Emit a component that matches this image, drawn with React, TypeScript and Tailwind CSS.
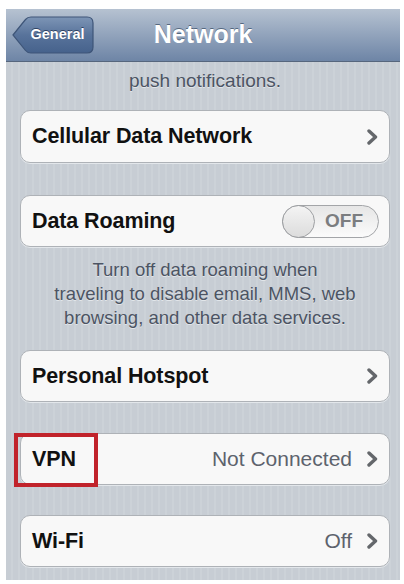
import React from "react";

const font = "font-['Liberation_Sans',Arial,sans-serif]";

function Chevron() {
  return (
    <svg width="11" height="16" viewBox="0 0 11 16" className="shrink-0">
      <path d="M2 2 L8.5 8 L2 14" fill="none" stroke="#64676b" strokeWidth="3.4" strokeLinecap="round" strokeLinejoin="round" />
    </svg>
  );
}

function Cell({ children, className = "" }: { children: React.ReactNode; className?: string }) {
  return (
    <div
      className={`h-[52px] flex items-center pl-[11px] pr-[11px] rounded-[10px] bg-[#f8f8f8] border border-[#aeb2b7] shadow-[0_1px_0_#e3e7eb] ${className}`}
    >
      {children}
    </div>
  );
}

function Label({ text }: { text: string }) {
  return <span className="text-[21.5px] font-bold text-[#111] tracking-[-0.1px]">{text}</span>;
}

function Toggle() {
  return (
    <div className="ml-auto mr-[-1px] w-[97px] h-[33px] rounded-full border border-[#a3a5a8] bg-gradient-to-b from-[#e6e6e6] to-[#fbfbfb] flex items-center">
      <div className="w-[33px] h-[33px] -ml-px rounded-full border border-[#9d9fa2] bg-gradient-to-b from-[#f4f4f4] to-[#dcdcdc] shrink-0" />
      <span className="ml-[10px] text-[19px] font-bold text-[#7b7d80]">OFF</span>
    </div>
  );
}

export default function App() {
  return (
    <div className={`w-[404px] h-[584px] bg-white pt-[9px] pl-[6px] pr-[4px] ${font}`}>
      <div className="h-[571px] flex flex-col bg-[#c7cdd4] bg-[repeating-linear-gradient(90deg,#c7cdd4_0px,#c7cdd4_5px,#ccd2d8_5px,#ccd2d8_7px)]">
        {/* nav bar */}
        <div className="h-[53px] shrink-0 grid grid-cols-[1fr_auto_1fr] items-center bg-gradient-to-b from-[#b6c2d1] to-[#6e85a6] border-b border-[#56667d]">
          <div className="pl-[6px]">
            <div className="relative w-[82px] h-[38px] flex items-center justify-center pl-[9px]">
              <svg width="82" height="38" viewBox="0 0 82 38" className="absolute left-0 top-0">
                <defs>
                  <linearGradient id="bb" x1="0" y1="0" x2="0" y2="1">
                    <stop offset="0" stopColor="#7d95b6" />
                    <stop offset="0.5" stopColor="#58739b" />
                    <stop offset="1" stopColor="#46628c" />
                  </linearGradient>
                </defs>
                <path
                  d="M1 19 L13.5 3.5 Q15.5 1 19 1 H75 Q81 1 81 7 V31 Q81 37 75 37 H19 Q15.5 37 13.5 34.5 Z"
                  fill="url(#bb)"
                  stroke="#3e5578"
                  strokeWidth="1.2"
                />
              </svg>
              <span className="relative text-[14.5px] font-bold text-white [text-shadow:0_-1px_0_#2f4363]">General</span>
            </div>
          </div>
          <div className="text-[25px] font-bold text-white [text-shadow:0_-1px_0_#55687f]">Network</div>
          <div />
        </div>

        {/* content */}
        <div className="flex flex-col pl-[14px] pr-[10px]">
          <div className="h-[38px] flex items-center justify-center text-[19px] text-[#4c5463] [text-shadow:0_1px_0_#e2e6ea]">
            push notifications.
          </div>

          <Cell className="mt-[10px] h-[53px]">
            <Label text="Cellular Data Network" />
            <span className="ml-auto">
              <Chevron />
            </span>
          </Cell>

          <Cell className="mt-[32px]">
            <Label text="Data Roaming" />
            <Toggle />
          </Cell>

          <div className="pt-[11px] text-center text-[18.5px] leading-[24px] text-[#4c5463] [text-shadow:0_1px_0_#e2e6ea]">
            Turn off data roaming when
            <br />
            traveling to disable email, MMS, web
            <br />
            browsing, and other data services.
          </div>

          <Cell className="mt-[20px]">
            <Label text="Personal Hotspot" />
            <span className="ml-auto">
              <Chevron />
            </span>
          </Cell>

          <div className="relative mt-[31px]">
            <Cell>
              <Label text="VPN" />
              <span className="ml-auto mr-[15px] text-[21px] text-[#5d636d]">Not Connected</span>
              <Chevron />
            </Cell>
            <div className="absolute left-[-6px] top-0 w-[84px] h-[54px] border-[4px] border-[#c1232b]" />
          </div>

          <Cell className="mt-[30px]">
            <Label text="Wi-Fi" />
            <span className="ml-auto mr-[15px] text-[21px] text-[#5d636d]">Off</span>
            <Chevron />
          </Cell>
        </div>
      </div>
    </div>
  );
}
